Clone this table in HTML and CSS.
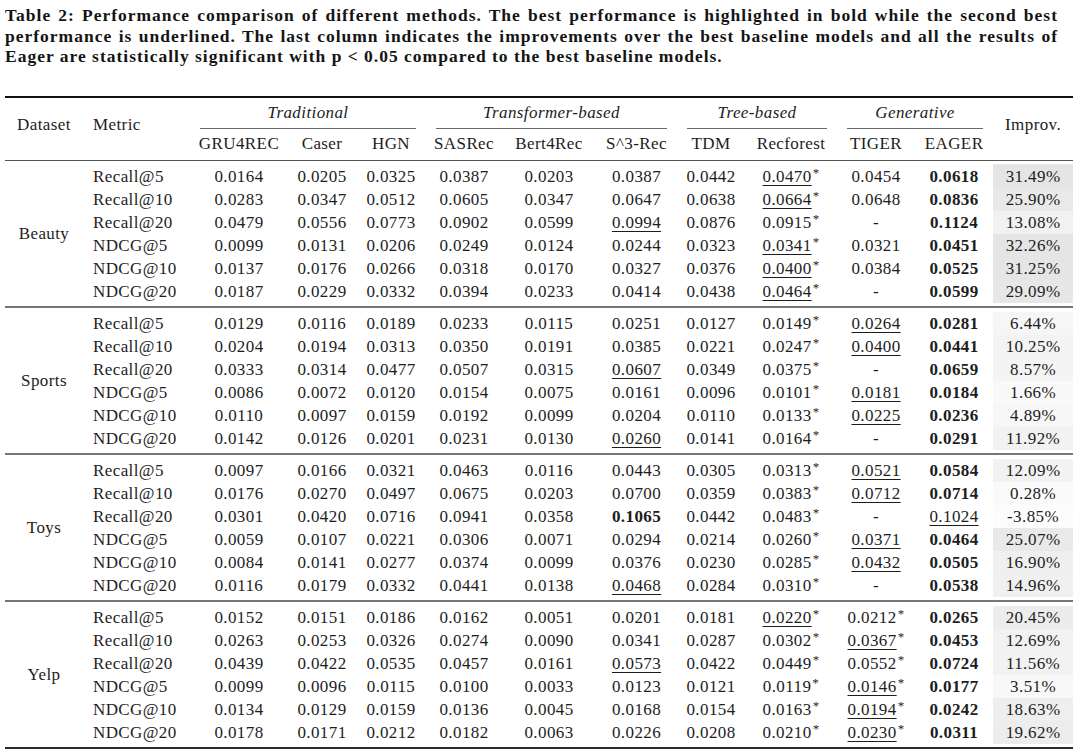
FILE: index.html
```html
<!DOCTYPE html>
<html lang="en">
<head>
<meta charset="utf-8">
<title>Table 2: Performance comparison</title>
<link rel="stylesheet" href="styles.css">
</head>
<body>
<div class="page">
  <p class="caption">
    <span class="line">Table 2: Performance comparison of different methods. The best performance is highlighted in bold while the second best</span>
    <span class="line">performance is underlined. The last column indicates the improvements over the best baseline models and all the results of</span>
    <span class="line last">Eager are statistically significant with p &lt; 0.05 compared to the best baseline models.</span>
  </p>
  <table class="results">
    <colgroup>
      <col class="c-ds"><col class="c-metric"><col class="c-gru"><col class="c-caser"><col class="c-hgn">
      <col class="c-sas"><col class="c-bert"><col class="c-s3"><col class="c-tdm"><col class="c-rf">
      <col class="c-tiger"><col class="c-eager"><col class="c-imp">
    </colgroup>
    <thead>
      <tr class="h1">
        <th rowspan="2" class="ds">Dataset</th>
        <th rowspan="2" class="metric">Metric</th>
        <th colspan="3" class="grp"><span class="grp-label">Traditional</span></th>
        <th colspan="3" class="grp"><span class="grp-label">Transformer-based</span></th>
        <th colspan="2" class="grp"><span class="grp-label">Tree-based</span></th>
        <th colspan="2" class="grp"><span class="grp-label">Generative</span></th>
        <th rowspan="2" class="imph">Improv.</th>
      </tr>
      <tr class="h2">
        <th>GRU4REC</th><th>Caser</th><th>HGN</th>
        <th>SASRec</th><th>Bert4Rec</th><th>S^3-Rec</th>
        <th>TDM</th><th>Recforest</th>
        <th>TIGER</th><th>EAGER</th>
      </tr>
    </thead>
    <tbody>
      <tr><td rowspan="6" class="ds">Beauty</td><td class="metric">Recall@5</td><td>0.0164</td><td>0.0205</td><td>0.0325</td><td>0.0387</td><td>0.0203</td><td>0.0387</td><td>0.0442</td><td><u>0.0470</u><sup class="s">*</sup></td><td>0.0454</td><td class="b">0.0618</td><td class="imp" style="--v:31.49">31.49%</td></tr>
      <tr><td class="metric">Recall@10</td><td>0.0283</td><td>0.0347</td><td>0.0512</td><td>0.0605</td><td>0.0347</td><td>0.0647</td><td>0.0638</td><td><u>0.0664</u><sup class="s">*</sup></td><td>0.0648</td><td class="b">0.0836</td><td class="imp" style="--v:25.90">25.90%</td></tr>
      <tr><td class="metric">Recall@20</td><td>0.0479</td><td>0.0556</td><td>0.0773</td><td>0.0902</td><td>0.0599</td><td><u>0.0994</u></td><td>0.0876</td><td>0.0915<sup class="s">*</sup></td><td>-</td><td class="b">0.1124</td><td class="imp" style="--v:13.08">13.08%</td></tr>
      <tr><td class="metric">NDCG@5</td><td>0.0099</td><td>0.0131</td><td>0.0206</td><td>0.0249</td><td>0.0124</td><td>0.0244</td><td>0.0323</td><td><u>0.0341</u><sup class="s">*</sup></td><td>0.0321</td><td class="b">0.0451</td><td class="imp" style="--v:32.26">32.26%</td></tr>
      <tr><td class="metric">NDCG@10</td><td>0.0137</td><td>0.0176</td><td>0.0266</td><td>0.0318</td><td>0.0170</td><td>0.0327</td><td>0.0376</td><td><u>0.0400</u><sup class="s">*</sup></td><td>0.0384</td><td class="b">0.0525</td><td class="imp" style="--v:31.25">31.25%</td></tr>
      <tr><td class="metric">NDCG@20</td><td>0.0187</td><td>0.0229</td><td>0.0332</td><td>0.0394</td><td>0.0233</td><td>0.0414</td><td>0.0438</td><td><u>0.0464</u><sup class="s">*</sup></td><td>-</td><td class="b">0.0599</td><td class="imp" style="--v:29.09">29.09%</td></tr>
    </tbody>
    <tbody>
      <tr><td rowspan="6" class="ds">Sports</td><td class="metric">Recall@5</td><td>0.0129</td><td>0.0116</td><td>0.0189</td><td>0.0233</td><td>0.0115</td><td>0.0251</td><td>0.0127</td><td>0.0149<sup class="s">*</sup></td><td><u>0.0264</u></td><td class="b">0.0281</td><td class="imp" style="--v:6.44">6.44%</td></tr>
      <tr><td class="metric">Recall@10</td><td>0.0204</td><td>0.0194</td><td>0.0313</td><td>0.0350</td><td>0.0191</td><td>0.0385</td><td>0.0221</td><td>0.0247<sup class="s">*</sup></td><td><u>0.0400</u></td><td class="b">0.0441</td><td class="imp" style="--v:10.25">10.25%</td></tr>
      <tr><td class="metric">Recall@20</td><td>0.0333</td><td>0.0314</td><td>0.0477</td><td>0.0507</td><td>0.0315</td><td><u>0.0607</u></td><td>0.0349</td><td>0.0375<sup class="s">*</sup></td><td>-</td><td class="b">0.0659</td><td class="imp" style="--v:8.57">8.57%</td></tr>
      <tr><td class="metric">NDCG@5</td><td>0.0086</td><td>0.0072</td><td>0.0120</td><td>0.0154</td><td>0.0075</td><td>0.0161</td><td>0.0096</td><td>0.0101<sup class="s">*</sup></td><td><u>0.0181</u></td><td class="b">0.0184</td><td class="imp" style="--v:1.66">1.66%</td></tr>
      <tr><td class="metric">NDCG@10</td><td>0.0110</td><td>0.0097</td><td>0.0159</td><td>0.0192</td><td>0.0099</td><td>0.0204</td><td>0.0110</td><td>0.0133<sup class="s">*</sup></td><td><u>0.0225</u></td><td class="b">0.0236</td><td class="imp" style="--v:4.89">4.89%</td></tr>
      <tr><td class="metric">NDCG@20</td><td>0.0142</td><td>0.0126</td><td>0.0201</td><td>0.0231</td><td>0.0130</td><td><u>0.0260</u></td><td>0.0141</td><td>0.0164<sup class="s">*</sup></td><td>-</td><td class="b">0.0291</td><td class="imp" style="--v:11.92">11.92%</td></tr>
    </tbody>
    <tbody>
      <tr><td rowspan="6" class="ds">Toys</td><td class="metric">Recall@5</td><td>0.0097</td><td>0.0166</td><td>0.0321</td><td>0.0463</td><td>0.0116</td><td>0.0443</td><td>0.0305</td><td>0.0313<sup class="s">*</sup></td><td><u>0.0521</u></td><td class="b">0.0584</td><td class="imp" style="--v:12.09">12.09%</td></tr>
      <tr><td class="metric">Recall@10</td><td>0.0176</td><td>0.0270</td><td>0.0497</td><td>0.0675</td><td>0.0203</td><td>0.0700</td><td>0.0359</td><td>0.0383<sup class="s">*</sup></td><td><u>0.0712</u></td><td class="b">0.0714</td><td class="imp" style="--v:0.28">0.28%</td></tr>
      <tr><td class="metric">Recall@20</td><td>0.0301</td><td>0.0420</td><td>0.0716</td><td>0.0941</td><td>0.0358</td><td class="b">0.1065</td><td>0.0442</td><td>0.0483<sup class="s">*</sup></td><td>-</td><td><u>0.1024</u></td><td class="imp" style="--v:-3.85">-3.85%</td></tr>
      <tr><td class="metric">NDCG@5</td><td>0.0059</td><td>0.0107</td><td>0.0221</td><td>0.0306</td><td>0.0071</td><td>0.0294</td><td>0.0214</td><td>0.0260<sup class="s">*</sup></td><td><u>0.0371</u></td><td class="b">0.0464</td><td class="imp" style="--v:25.07">25.07%</td></tr>
      <tr><td class="metric">NDCG@10</td><td>0.0084</td><td>0.0141</td><td>0.0277</td><td>0.0374</td><td>0.0099</td><td>0.0376</td><td>0.0230</td><td>0.0285<sup class="s">*</sup></td><td><u>0.0432</u></td><td class="b">0.0505</td><td class="imp" style="--v:16.90">16.90%</td></tr>
      <tr><td class="metric">NDCG@20</td><td>0.0116</td><td>0.0179</td><td>0.0332</td><td>0.0441</td><td>0.0138</td><td><u>0.0468</u></td><td>0.0284</td><td>0.0310<sup class="s">*</sup></td><td>-</td><td class="b">0.0538</td><td class="imp" style="--v:14.96">14.96%</td></tr>
    </tbody>
    <tbody class="last">
      <tr><td rowspan="6" class="ds">Yelp</td><td class="metric">Recall@5</td><td>0.0152</td><td>0.0151</td><td>0.0186</td><td>0.0162</td><td>0.0051</td><td>0.0201</td><td>0.0181</td><td><u>0.0220</u><sup class="s">*</sup></td><td>0.0212<sup class="s">*</sup></td><td class="b">0.0265</td><td class="imp" style="--v:20.45">20.45%</td></tr>
      <tr><td class="metric">Recall@10</td><td>0.0263</td><td>0.0253</td><td>0.0326</td><td>0.0274</td><td>0.0090</td><td>0.0341</td><td>0.0287</td><td>0.0302<sup class="s">*</sup></td><td><u>0.0367</u><sup class="s">*</sup></td><td class="b">0.0453</td><td class="imp" style="--v:12.69">12.69%</td></tr>
      <tr><td class="metric">Recall@20</td><td>0.0439</td><td>0.0422</td><td>0.0535</td><td>0.0457</td><td>0.0161</td><td><u>0.0573</u></td><td>0.0422</td><td>0.0449<sup class="s">*</sup></td><td>0.0552<sup class="s">*</sup></td><td class="b">0.0724</td><td class="imp" style="--v:11.56">11.56%</td></tr>
      <tr><td class="metric">NDCG@5</td><td>0.0099</td><td>0.0096</td><td>0.0115</td><td>0.0100</td><td>0.0033</td><td>0.0123</td><td>0.0121</td><td>0.0119<sup class="s">*</sup></td><td><u>0.0146</u><sup class="s">*</sup></td><td class="b">0.0177</td><td class="imp" style="--v:3.51">3.51%</td></tr>
      <tr><td class="metric">NDCG@10</td><td>0.0134</td><td>0.0129</td><td>0.0159</td><td>0.0136</td><td>0.0045</td><td>0.0168</td><td>0.0154</td><td>0.0163<sup class="s">*</sup></td><td><u>0.0194</u><sup class="s">*</sup></td><td class="b">0.0242</td><td class="imp" style="--v:18.63">18.63%</td></tr>
      <tr><td class="metric">NDCG@20</td><td>0.0178</td><td>0.0171</td><td>0.0212</td><td>0.0182</td><td>0.0063</td><td>0.0226</td><td>0.0208</td><td>0.0210<sup class="s">*</sup></td><td><u>0.0230</u><sup class="s">*</sup></td><td class="b">0.0311</td><td class="imp" style="--v:19.62">19.62%</td></tr>
    </tbody>
  </table>
</div>
</body>
</html>
```

FILE: styles.css
```css
* { box-sizing: border-box; }

html, body {
  margin: 0;
  padding: 0;
  background: #ffffff;
}

body {
  font-family: "Liberation Serif", "Times New Roman", serif;
  color: #1d1d1d;
}

.page {
  padding: 5px 0 0 5px;
}

.caption {
  width: 1053px;
  margin: 0;
  font-size: 17.5px;
  line-height: 20.5px;
  letter-spacing: 1px;
  font-weight: bold;
  color: #141414;
}

.caption .line {
  display: block;
  text-align: justify;
  text-align-last: justify;
}

.caption .line.last {
  text-align-last: left;
}

.results {
  margin-top: 29px;
  width: 1068px;
  border-collapse: collapse;
  table-layout: fixed;
  font-size: 17px;
  letter-spacing: 0.4px;
}

.c-ds { width: 78px; }
.c-metric { width: 107px; }
.c-gru { width: 98px; }
.c-caser { width: 68px; }
.c-hgn { width: 70px; }
.c-sas { width: 76px; }
.c-bert { width: 94px; }
.c-s3 { width: 81px; }
.c-tdm { width: 68px; }
.c-rf { width: 92px; }
.c-tiger { width: 78px; }
.c-eager { width: 78px; }
.c-imp { width: 80px; }

th, td {
  padding: 0;
  text-align: center;
  white-space: nowrap;
  font-weight: normal;
}

thead {
  border-top: 2px solid #111;
  border-bottom: 1px solid #555;
}

thead th {
  line-height: 20px;
  vertical-align: middle;
}

.h1 th.ds,
.h1 th.metric,
.h1 th.imph {
  padding-bottom: 7px;
}

.h1 .grp {
  padding: 5px 10px 0;
}

.grp-label {
  display: block;
  font-style: italic;
  padding-bottom: 5px;
  border-bottom: 1px solid #6a6a6a;
}

.h2 th {
  padding: 5px 0 6px;
}

th.metric, td.metric {
  text-align: left;
  padding-left: 10px;
}

tbody {
  border-bottom: 2px solid #777;
}

tbody.last {
  border-bottom: 2px solid #2a2a2a;
}

tbody td {
  line-height: 23px;
  height: 23px;
}

tbody tr:first-child td {
  padding-top: 4px;
  height: 27px;
}

tbody tr:last-child td {
  padding-bottom: 3px;
  height: 26px;
}

tbody td.ds {
  vertical-align: middle;
  padding-top: 4px;
  padding-bottom: 3px;
}

td.b {
  font-weight: bold;
}

u {
  text-decoration: underline;
  text-decoration-thickness: 1px;
  text-underline-offset: 3px;
}

sup.s {
  font-size: 13px;
  line-height: 0;
  vertical-align: 5px;
  margin-left: 1px;
}

td.imp {
  background-color: hsl(0 0% calc(98% - var(--v) * 0.26%));
  background-clip: content-box;
}
```
